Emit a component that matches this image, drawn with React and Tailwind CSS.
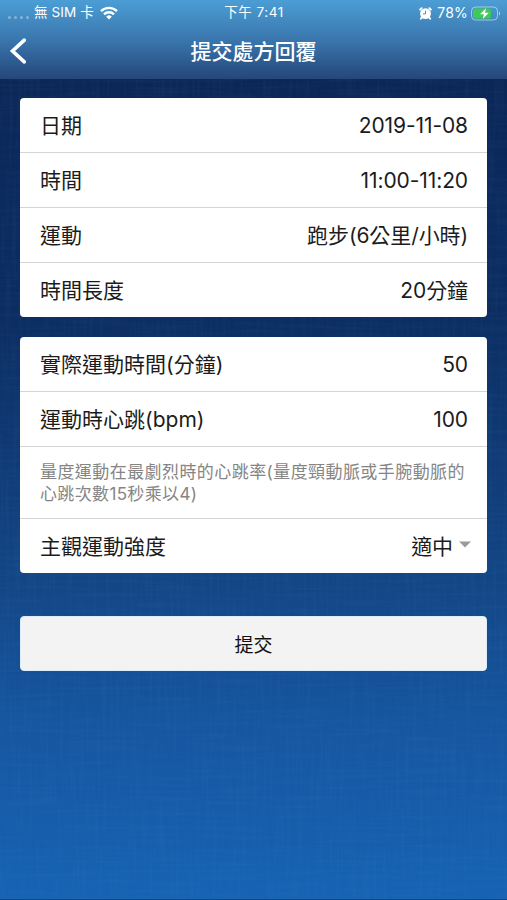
const details = [
  { label: "日期", value: "2019-11-08" },
  { label: "時間", value: "11:00-11:20" },
  { label: "運動", value: "跑步(6公里/小時)" },
  { label: "時間長度", value: "20分鐘" },
];

export default function App() {
  return (
    <div className="relative flex h-[900px] w-full flex-col overflow-hidden bg-[linear-gradient(#0b2758_9%,#0c2d62_35%,#134686_65%,#1655a0_80%,#1763b3)] font-[Inter,'Noto_Sans_CJK_TC',sans-serif] text-[#1c1c1c]">
      <Weave />
      <header className="relative h-[79px] shrink-0 bg-linear-to-b from-[#4b9ed5] via-[#3a77ae] via-50% to-[#25477a] text-white">
        <StatusBar />
        <div className="grid h-[53px] grid-cols-[60px_1fr_60px] items-center">
          <button aria-label="返回" className="-mt-[3px] pl-2">
            <svg width="18" height="28" viewBox="0 0 18 28" fill="none" stroke="currentColor" strokeWidth="3.6">
              <path d="M16.3 3.2 4.5 14l11.8 10.8" strokeLinecap="round" />
            </svg>
          </button>
          <h1 className="-mt-0.5 text-center text-[21px] leading-none font-medium">提交處方回覆</h1>
        </div>
      </header>

      <main className="relative flex flex-col px-5 pt-[19px]">
        <Card>
          {details.map((d) => (
            <Row key={d.label} label={d.label}>
              {d.value}
            </Row>
          ))}
        </Card>

        <Card className="mt-[20px]">
          <Row label="實際運動時間(分鐘)">50</Row>
          <Row label="運動時心跳(bpm)">100</Row>
          <p className="h-[72px] pt-[14px] pl-5 text-[17px] leading-[22px] tracking-[0.43px] whitespace-nowrap text-[#858585]">
            量度運動在最劇烈時的心跳率(量度頸動脈或手腕動脈的
            <br />
            <span className="tracking-[0.35px]">心跳次數15秒乘以4)</span>
          </p>
          <Row label="主觀運動強度">
            <span className="-mr-[3px] flex items-center gap-1.5">
              適中
              <svg width="12" height="7" viewBox="0 0 12 7" className="-mt-1 fill-[#9b9b9b]">
                <path d="M0 .5h12L6 6.5z" />
              </svg>
            </span>
          </Row>
        </Card>

        <button className="mt-[43px] h-[55px] rounded border border-[#dcecf8] bg-[#f3f3f3] pt-1.5 text-[19px] text-[#111]">
          提交
        </button>
      </main>
      <div className="absolute inset-x-0 bottom-0 h-px bg-[#0c488e]" />
    </div>
  );
}

function Card({ children, className = "" }) {
  return (
    <section className={`divide-y divide-[#d4d4d7] overflow-hidden rounded bg-white ${className}`}>
      {children}
    </section>
  );
}

function Row({ label, children }) {
  return (
    <div className="flex h-[55px] items-center justify-between pr-[19px] pl-5 text-[21px] leading-none last:h-[54px]">
      <span>{label}</span>
      <span className="tracking-[-0.1px]">{children}</span>
    </div>
  );
}

function StatusBar() {
  return (
    <div className="grid h-[26px] grid-cols-3 items-center text-[13.5px] leading-none">
      <div className="flex items-center pl-2">
        <div className="mt-2 flex gap-[3px]">
          {[0, 1, 2, 3].map((i) => (
            <i key={i} className="size-[3px] rounded-full bg-white/35" />
          ))}
        </div>
        <span className="ml-[5px] tracking-[0.1px] whitespace-nowrap">無 SIM 卡</span>
        <svg width="18" height="14" viewBox="0 0 18 14" className="ml-1.5" fill="none" stroke="currentColor" strokeWidth="2.4">
          <path d="M1 5.1a11.6 11.6 0 0 1 16 0M4 8.3a7.2 7.2 0 0 1 10 0" />
          <path d="m6.2 10.7 2.8 2.8 2.8-2.8a4 4 0 0 0-5.6 0z" fill="currentColor" stroke="none" />
        </svg>
      </div>
      <div className="pl-px text-center tracking-[0.5px]">下午 7:41</div>
      <div className="flex items-center justify-end pr-[6px]">
        <svg width="13" height="13" viewBox="0 0 13 13">
          <path
            d="M1.1 2.6 2.6 1.2M11.9 2.6l-1.5-1.4M2.8 10.6l-.9 1.1M10.2 10.6l.9 1.1"
            stroke="currentColor"
            strokeWidth="1.9"
            strokeLinecap="round"
          />
          <circle cx="6.5" cy="6.6" r="5.4" fill="currentColor" />
          <path d="M6.5 3.6v3.3H4" stroke="#4590c6" strokeWidth="1" fill="none" />
        </svg>
        <span className="ml-[5px] text-[14px] tracking-[0.2px]">78%</span>
        <svg width="30" height="15" viewBox="0 0 30 15" className="ml-[3px]">
          <rect x=".5" y="1" width="26" height="13" rx="4" fill="none" stroke="#fff" strokeOpacity=".5" />
          <rect x="2" y="2.5" width="18" height="10" rx="2.5" fill="#3ecb55" />
          <path d="M28 5.5c1.4.6 1.4 3.4 0 4z" fill="#fff" fillOpacity=".6" />
          <path d="M15 2.2 9 8.3h3.8l-1 4.7 6-6.2H14z" fill="#fff" />
        </svg>
      </div>
    </div>
  );
}

// faint linen threads over the blue gradient
function Weave() {
  return (
    <svg className="absolute inset-0 h-full w-full" aria-hidden="true">
      <filter id="warp" x="0" y="0" width="100%" height="100%">
        <feTurbulence type="fractalNoise" baseFrequency="0.3 0.015" numOctaves="2" seed="4" />
        <feColorMatrix values="0 0 0 0 0.15  0 0 0 0 0.45  0 0 0 0 0.65  1.1 0 0 0 -0.46" />
      </filter>
      <filter id="weft" x="0" y="0" width="100%" height="100%">
        <feTurbulence type="fractalNoise" baseFrequency="0.015 0.3" numOctaves="2" seed="9" />
        <feColorMatrix values="0 0 0 0 0.15  0 0 0 0 0.45  0 0 0 0 0.65  1.1 0 0 0 -0.46" />
      </filter>
      <rect width="100%" height="100%" filter="url(#warp)" opacity=".09" />
      <rect width="100%" height="100%" filter="url(#weft)" opacity=".09" />
    </svg>
  );
}
